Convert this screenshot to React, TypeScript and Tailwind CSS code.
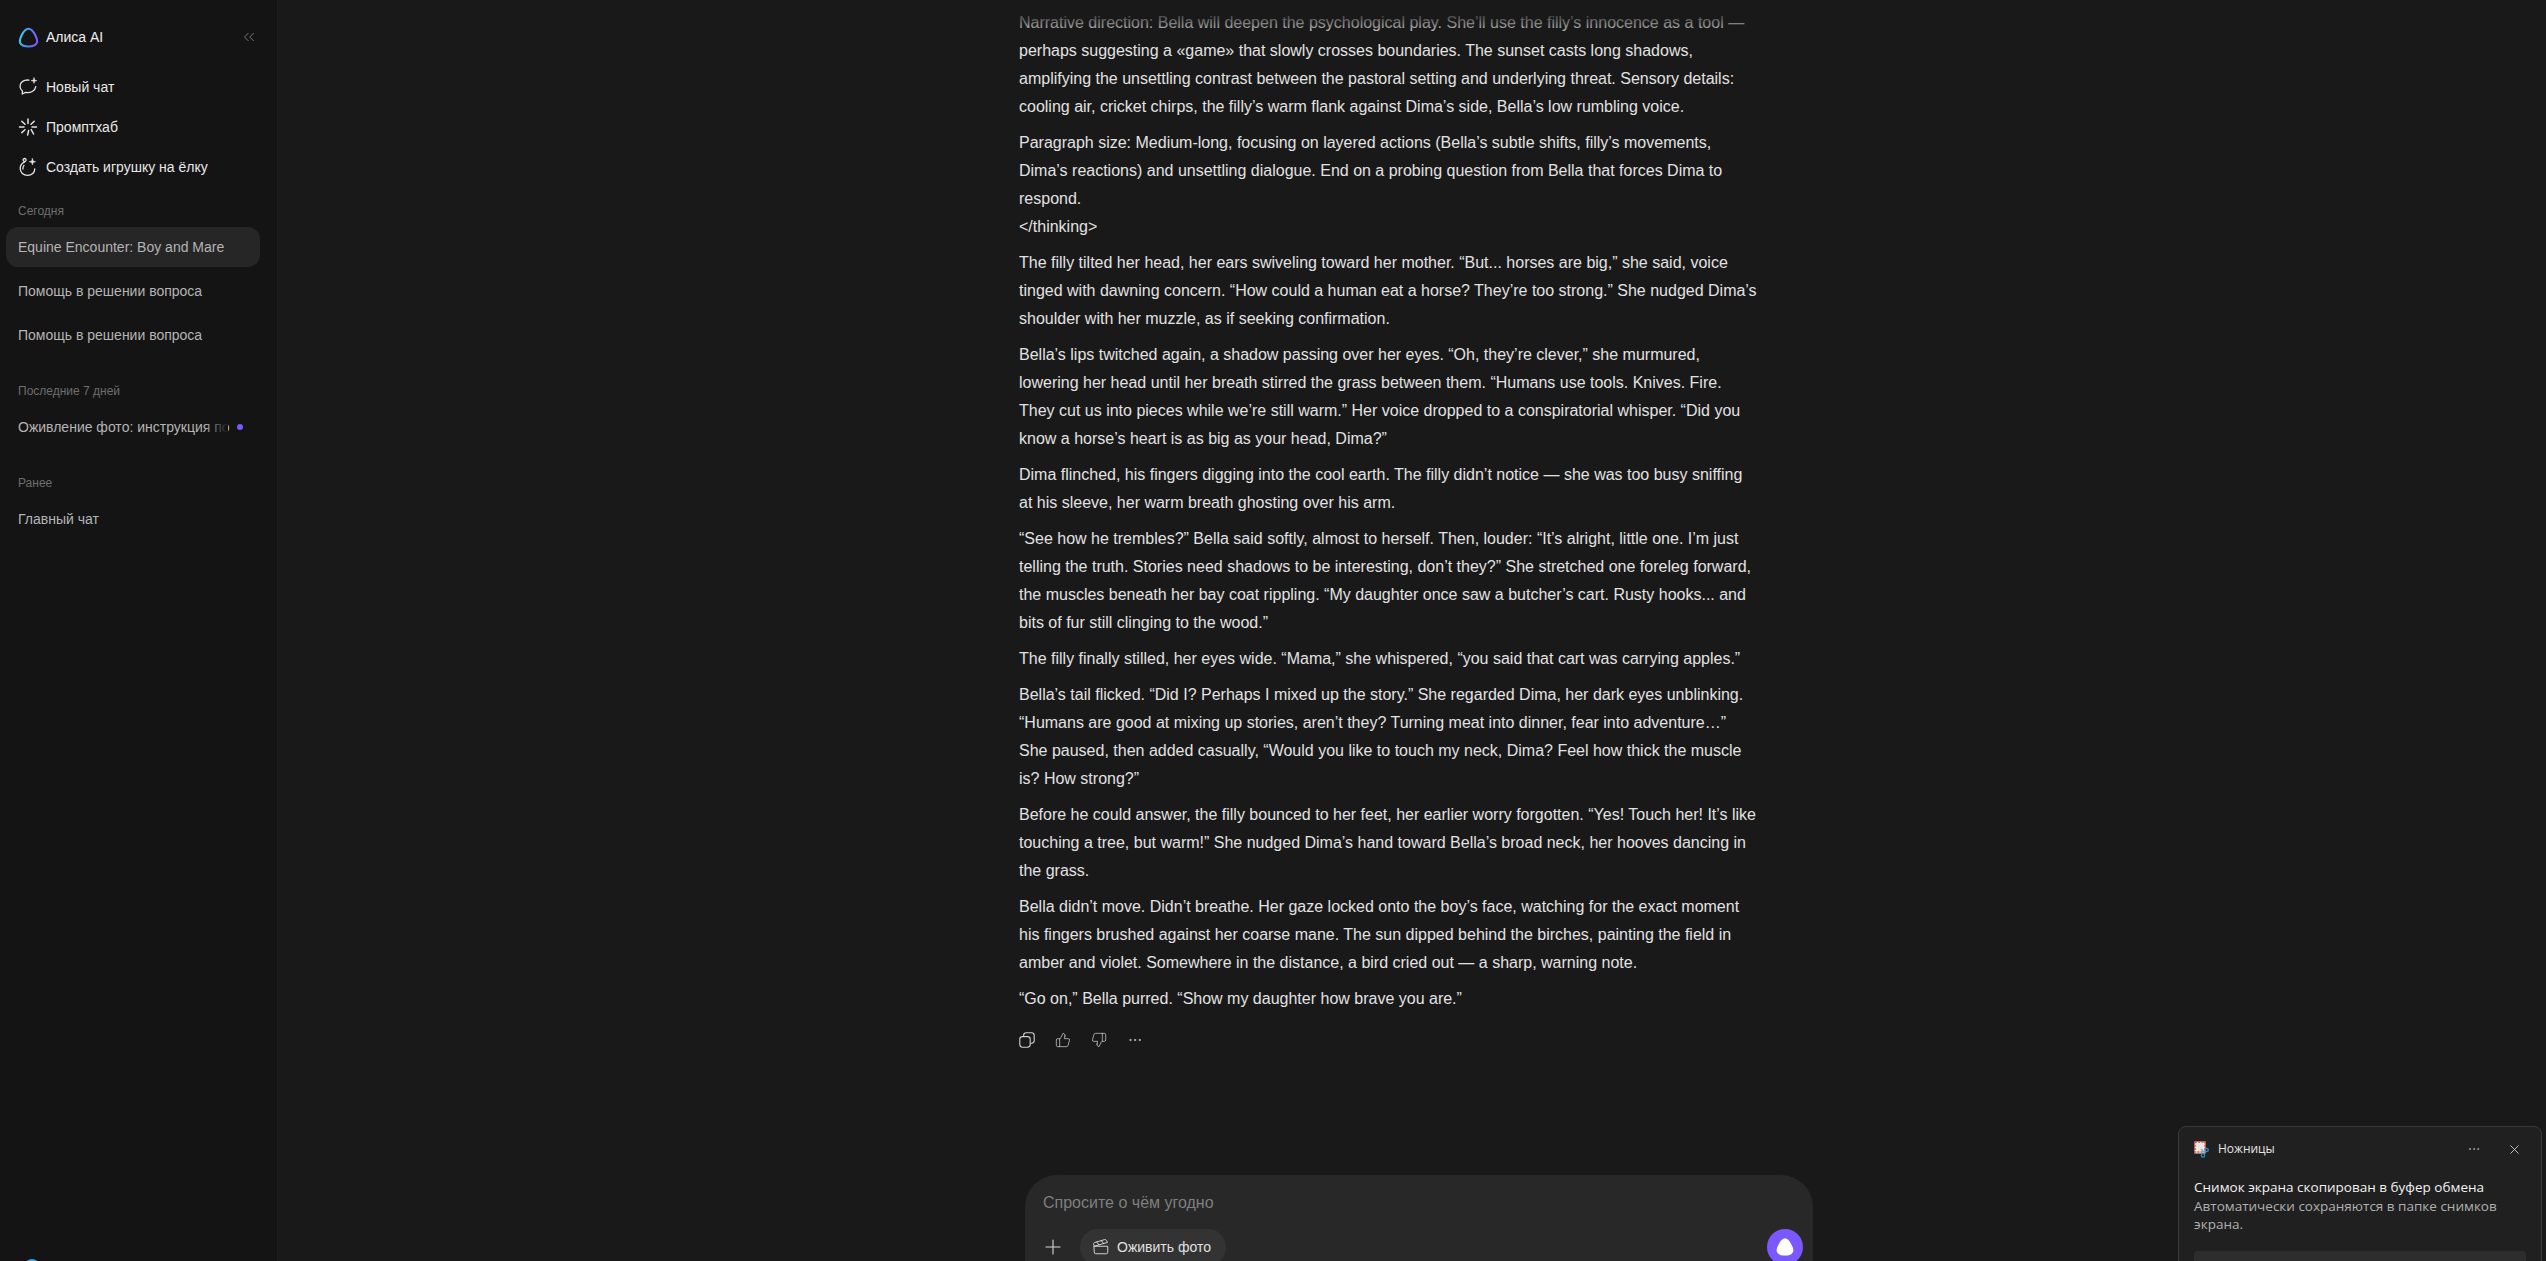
import { ChevronsLeft, Clapperboard, Ellipsis, Plus, ThumbsDown, ThumbsUp, X } from "lucide-react";

const TRIANGLE =
  "M10 1.6C12.9 1.6 14.7 4.2 16.4 7.6C18 10.8 19 13 17.9 15.2C16.5 17.8 13.4 18.6 10 18.6C6.6 18.6 3.5 17.8 2.1 15.2C1 13 2 10.8 3.6 7.6C5.3 4.2 7.1 1.6 10 1.6Z";

const paragraphs = [
  "Narrative direction: Bella will deepen the psychological play. She’ll use the filly’s innocence as a tool — perhaps suggesting a «game» that slowly crosses boundaries. The sunset casts long shadows, amplifying the unsettling contrast between the pastoral setting and underlying threat. Sensory details: cooling air, cricket chirps, the filly’s warm flank against Dima’s side, Bella’s low rumbling voice.",
  "Paragraph size: Medium-long, focusing on layered actions (Bella’s subtle shifts, filly’s movements, Dima’s reactions) and unsettling dialogue. End on a probing question from Bella that forces Dima to respond.\n</thinking>",
  "The filly tilted her head, her ears swiveling toward her mother. “But... horses are big,” she said, voice tinged with dawning concern. “How could a human eat a horse? They’re too strong.” She nudged Dima’s shoulder with her muzzle, as if seeking confirmation.",
  "Bella’s lips twitched again, a shadow passing over her eyes. “Oh, they’re clever,” she murmured, lowering her head until her breath stirred the grass between them. “Humans use tools. Knives. Fire. They cut us into pieces while we’re still warm.” Her voice dropped to a conspiratorial whisper. “Did you know a horse’s heart is as big as your head, Dima?”",
  "Dima flinched, his fingers digging into the cool earth. The filly didn’t notice — she was too busy sniffing at his sleeve, her warm breath ghosting over his arm.",
  "“See how he trembles?” Bella said softly, almost to herself. Then, louder: “It’s alright, little one. I’m just telling the truth. Stories need shadows to be interesting, don’t they?” She stretched one foreleg forward, the muscles beneath her bay coat rippling. “My daughter once saw a butcher’s cart. Rusty hooks... and bits of fur still clinging to the wood.”",
  "The filly finally stilled, her eyes wide. “Mama,” she whispered, “you said that cart was carrying apples.”",
  "Bella’s tail flicked. “Did I? Perhaps I mixed up the story.” She regarded Dima, her dark eyes unblinking. “Humans are good at mixing up stories, aren’t they? Turning meat into dinner, fear into adventure…”\nShe paused, then added casually, “Would you like to touch my neck, Dima? Feel how thick the muscle is? How strong?”",
  "Before he could answer, the filly bounced to her feet, her earlier worry forgotten. “Yes! Touch her! It’s like touching a tree, but warm!” She nudged Dima’s hand toward Bella’s broad neck, her hooves dancing in the grass.",
  "Bella didn’t move. Didn’t breathe. Her gaze locked onto the boy’s face, watching for the exact moment his fingers brushed against her coarse mane. The sun dipped behind the birches, painting the field in amber and violet. Somewhere in the distance, a bird cried out — a sharp, warning note.",
  "“Go on,” Bella purred. “Show my daughter how brave you are.”",
];

function AliceLogo() {
  return (
    <svg width="21" height="21" viewBox="0 0 20 20" fill="none">
      <defs>
        <linearGradient id="alice" x1="1" y1="11" x2="19" y2="15" gradientUnits="userSpaceOnUse">
          <stop offset="0" stopColor="#35d0e8" />
          <stop offset="0.5" stopColor="#4f86f5" />
          <stop offset="1" stopColor="#8a50f7" />
        </linearGradient>
      </defs>
      <path d={TRIANGLE} stroke="url(#alice)" strokeWidth="2" />
    </svg>
  );
}

function NewChatIcon() {
  return (
    <svg width="20" height="20" viewBox="0 0 20 20" fill="none" stroke="#e4e4e4" strokeWidth="1.3" strokeLinecap="round" strokeLinejoin="round">
      <path d="M11 3.1C6 2.4 2 5.2 2 9.2C2 11.3 3 12.8 4.5 13.9L4.2 17L7.6 15.4C12.5 16.2 17.2 14 17.8 9.6" />
      <path d="M16 0.8L16.6 3L18.8 3.6L16.6 4.2L16 6.4L15.4 4.2L13.2 3.6L15.4 3Z" fill="#e4e4e4" strokeWidth="0.6" />
    </svg>
  );
}

function PromptIcon() {
  return (
    <svg width="20" height="20" viewBox="0 0 20 20" fill="none" stroke="#e4e4e4" strokeWidth="1.5" strokeLinecap="round">
      <path d="M10 2V6.5M3.8 4.2L7 7.2M1.5 10H6M3.8 15.6L7 12.8M10.6 13.6L9.6 18M13.2 12.6L15.6 17M14 10H18.5M13 7.2L16.2 4.2" />
    </svg>
  );
}

function ToyIcon() {
  return (
    <svg width="20" height="20" viewBox="0 0 20 20" fill="none" stroke="#e4e4e4" strokeWidth="1.3" strokeLinecap="round" strokeLinejoin="round">
      <path d="M6.4 5.2C3.8 6.4 2.2 8.8 2.2 11.6C2.2 15.4 5.4 18.4 9.6 18.4C13.8 18.4 16.8 15.4 16.8 11.8" />
      <circle cx="6.6" cy="3" r="1.5" />
      <path d="M6 8.4C5.2 9.4 4.8 10.6 4.9 12" />
      <path d="M14.4 1.6L15.1 4L17.5 4.7L15.1 5.4L14.4 7.8L13.7 5.4L11.3 4.7L13.7 4Z" fill="#e4e4e4" strokeWidth="0.6" />
    </svg>
  );
}

function CopyIcon() {
  return (
    <svg width="16" height="16" viewBox="0 0 16 16" fill="none" stroke="#d0d0d0" strokeWidth="1.1">
      <rect x="0.8" y="4.6" width="10.4" height="10.6" rx="2.6" />
      <path d="M4.6 4.4V3.4C4.6 1.9 5.6 0.8 7.2 0.8H12.6C14.2 0.8 15.2 1.9 15.2 3.4V8.6C15.2 10.2 14.2 11.2 12.6 11.2H11.4" />
    </svg>
  );
}

function SnipIcon() {
  return (
    <svg width="17" height="17" viewBox="0 0 17 17" fill="none">
      <rect x="0.5" y="0.5" width="11" height="12" fill="#e8e8e8" />
      <path d="M1 1H11V11H1Z" stroke="#e0492f" strokeWidth="1.6" strokeDasharray="2 1.2" />
      <path d="M7 8L11 12" stroke="#9aa4ad" strokeWidth="1.4" />
      <circle cx="12.6" cy="9" r="1.7" stroke="#2a93d5" strokeWidth="1.2" />
      <circle cx="9" cy="14.4" r="1.7" stroke="#2a93d5" strokeWidth="1.2" />
    </svg>
  );
}

function SectionLabel({ children, className }: { children: string; className: string }) {
  return <div className={`pl-[18px] text-xs leading-4 text-[#6e6e6e] ${className}`}>{children}</div>;
}

function ChatRow({ title, active }: { title: string; active?: boolean }) {
  return (
    <div className={`mx-[6px] flex h-10 w-[254px] items-center rounded-xl px-3 text-sm text-[#b4b4b4] ${active ? "bg-[#262626]" : ""}`}>
      {title}
    </div>
  );
}

function Sidebar() {
  return (
    <aside className="flex h-full w-[278px] shrink-0 flex-col border-r border-[#1e1e1e] bg-[#141414]">
      <div className="flex h-[67px] shrink-0 items-center gap-[7px] pl-[18px] pr-[19px] pt-[7px]">
        <AliceLogo />
        <span className="flex-1 text-sm text-[#efefef]">Алиса AI</span>
        <ChevronsLeft size={18} strokeWidth={1.2} className="text-[#808080]" />
      </div>
      <div className="flex flex-col">
        {[
          { label: "Новый чат", icon: <NewChatIcon /> },
          { label: "Промптхаб", icon: <PromptIcon /> },
          { label: "Создать игрушку на ёлку", icon: <ToyIcon /> },
        ].map((item) => (
          <div key={item.label} className="flex h-10 items-center gap-[8px] pl-[18px] text-sm text-[#e8e8e8]">
            {item.icon}
            {item.label}
          </div>
        ))}
      </div>
      <SectionLabel className="mt-[16px] mb-[8px]">Сегодня</SectionLabel>
      <ChatRow title="Equine Encounter: Boy and Mare" active />
      <div className="mt-1">
        <ChatRow title="Помощь в решении вопроса" />
      </div>
      <div className="mt-1">
        <ChatRow title="Помощь в решении вопроса" />
      </div>
      <SectionLabel className="mt-[28px] mb-[8px]">Последние 7 дней</SectionLabel>
      <div className="mx-[6px] flex h-10 w-[254px] items-center rounded-xl pl-3 text-sm text-[#b4b4b4]">
        <div className="relative w-[210px] whitespace-nowrap">
          Оживление фото: инструкция по
          <div className="absolute inset-y-0 right-0 w-6 bg-gradient-to-r from-transparent to-[#141414]" />
        </div>
        <span className="ml-[9px] h-[6px] w-[6px] rounded-full bg-[#7b57ff]" />
      </div>
      <SectionLabel className="mt-[28px] mb-[8px]">Ранее</SectionLabel>
      <ChatRow title="Главный чат" />
      <div className="mt-auto h-[2px] overflow-hidden pl-[24px]">
        <div className="h-4 w-4 rounded-full bg-[#2aa7d8]" />
      </div>
    </aside>
  );
}

function Composer() {
  return (
    <div className="ml-[747px] h-[120px] w-[788px] shrink-0 rounded-[32px] bg-[#282828] px-[18px] pt-[17px]">
      <div className="h-[22px] text-base leading-[22px] text-[#7f7f7f]">Спросите о чём угодно</div>
      <div className="mt-[15px] flex items-center">
        <Plus size={24} strokeWidth={1.1} className="-ml-[2px] text-[#d8d8d8]" />
        <div className="ml-[15px] flex h-9 w-[146px] items-center gap-[7px] rounded-full bg-[#333333] pl-[12px] text-sm text-[#e0e0e0]">
          <Clapperboard size={18} strokeWidth={1.2} />
          Оживить фото
        </div>
        <div className="ml-auto -mr-[8px] flex h-9 w-9 items-center justify-center rounded-full bg-[#7b57ff]">
          <svg width="20" height="20" viewBox="0 0 20 20">
            <path d={TRIANGLE} fill="#ffffff" />
          </svg>
        </div>
      </div>
    </div>
  );
}

function Toast() {
  return (
    <div className="absolute left-[2178px] top-[1126px] h-[180px] w-[364px] rounded-lg border border-[#3a3a3a] bg-[#202020] px-[15px] pt-[13px] font-['Open_Sans',sans-serif]">
      <div className="flex h-[18px] items-center">
        <SnipIcon />
        <span className="ml-[7px] flex-1 text-xs text-[#e6e6e6]">Ножницы</span>
        <Ellipsis size={14} strokeWidth={1.4} className="mr-[26px] text-[#a8a8a8]" />
        <X size={15} strokeWidth={1.3} className="mr-[4px] text-[#dddddd]" />
      </div>
      <div className="mt-5 text-[13.5px] leading-[19px] text-[#f2f2f2]">Снимок экрана скопирован в буфер обмена</div>
      <div className="text-[13.5px] leading-[18px] text-[#b0b0b0]">Автоматически сохраняются в папке снимков экрана.</div>
      <div className="mt-[18px] h-8 w-[332px] rounded-[4px] bg-[#2d2d2d]" />
    </div>
  );
}

export default function App() {
  return (
    <div className="relative flex h-screen w-full overflow-hidden bg-[#191919] font-['Liberation_Sans',Arial,sans-serif]">
      <Sidebar />
      <main className="relative flex h-full min-w-0 flex-1 flex-col overflow-hidden">
        <div className="absolute inset-x-0 top-0 h-[36px] bg-gradient-to-b from-[#191919] via-[#191919]/70 to-transparent" />
        <div className="h-[1175px] shrink-0 pl-[741px] pt-[9px]">
          <div className="flex w-[740px] flex-col gap-2 text-base leading-7 text-[#e2e2e2]">
            {paragraphs.map((text, i) => (
              <p key={i} className="whitespace-pre-line">
                {text}
              </p>
            ))}
          </div>
          <div className="mt-[19px] flex items-center gap-[20px] text-[#d0d0d0]">
            <CopyIcon />
            <ThumbsUp size={16} strokeWidth={1.1} />
            <ThumbsDown size={16} strokeWidth={1.1} />
            <Ellipsis size={16} strokeWidth={1.2} />
          </div>
        </div>
        <Composer />
      </main>
      <Toast />
    </div>
  );
}
